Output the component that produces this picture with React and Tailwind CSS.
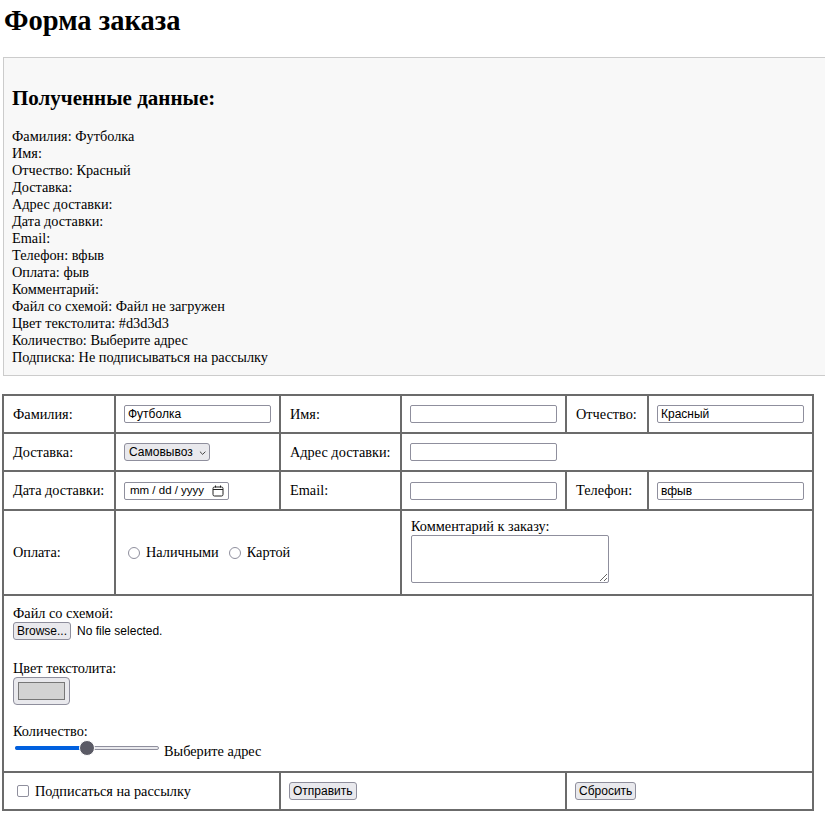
import { useState } from "react";

const received = [
  ["Фамилия", "Футболка"],
  ["Имя", ""],
  ["Отчество", "Красный"],
  ["Доставка", ""],
  ["Адрес доставки", ""],
  ["Дата доставки", ""],
  ["Email", ""],
  ["Телефон", "вфыв"],
  ["Оплата", "фыв"],
  ["Комментарий", ""],
  ["Файл со схемой", "Файл не загружен"],
  ["Цвет текстолита", "#d3d3d3"],
  ["Количество", "Выберите адрес"],
  ["Подписка", "Не подписываться на рассылку"],
];

const cell = "border-2 border-[#6b6b6b] px-2 align-middle";
const label = "border-2 border-[#6b6b6b] pl-[9px] pr-2 align-middle";
const field =
  "w-[147px] h-[18px] border border-[#8f8f9d] rounded-[2px] bg-white px-[3px] text-[12px] font-['Liberation_Sans',sans-serif] text-black outline-none";
const btn =
  "h-[18px] px-[3px] border border-[#8f8f9d] rounded-[3px] bg-[#e9e9ed] text-[12px] leading-[16px] font-['Liberation_Sans',sans-serif] text-black";

function Radio({ label }) {
  return (
    <label className="flex items-center gap-[6px]">
      <span className="w-[12px] h-[12px] rounded-full border border-[#8f8f9d] bg-white" />
      <span>{label}</span>
    </label>
  );
}

export default function App() {
  const [form, setForm] = useState({
    last: "Футболка",
    first: "",
    middle: "Красный",
    address: "",
    email: "",
    phone: "вфыв",
    comment: "",
  });
  const set = (k) => (e) => setForm({ ...form, [k]: e.target.value });

  return (
    <div className="bg-white text-black font-['Liberation_Serif','Times_New_Roman',serif] text-[14.3px] leading-[17px] pl-[3px] pb-[20px] overflow-hidden">
      <h1 className="text-[28.5px] leading-[34px] font-bold pt-[4px] pl-[1px]">Форма заказа</h1>

      <div className="mt-[19px] bg-[#f8f8f8] border-l border-t border-b border-[#cccccc] pl-[8px] pt-[29px] pb-[9px]">
        <h3 className="text-[21px] leading-[23px] font-bold">Полученные данные:</h3>
        <div className="mt-[18px]">
          {received.map(([k, v]) => (
            <p key={k}>
              {k}: {v}
            </p>
          ))}
        </div>
      </div>

      <table className="mt-[18px] -ml-[1px] w-[810px] table-fixed border-collapse">
        <colgroup>
          <col className="w-[112px]" />
          <col className="w-[165px]" />
          <col className="w-[121px]" />
          <col className="w-[165px]" />
          <col className="w-[82px]" />
          <col className="w-[165px]" />
        </colgroup>
        <tbody>
          <tr className="h-[38px]">
            <td className={label}>Фамилия:</td>
            <td className={cell}>
              <input className={field} value={form.last} onChange={set("last")} />
            </td>
            <td className={label}>Имя:</td>
            <td className={cell}>
              <input className={field} value={form.first} onChange={set("first")} />
            </td>
            <td className={label}>Отчество:</td>
            <td className={cell}>
              <input className={field} value={form.middle} onChange={set("middle")} />
            </td>
          </tr>
          <tr className="h-[38px]">
            <td className={label}>Доставка:</td>
            <td className={cell}>
              <span className={btn + " inline-flex items-center gap-[6px] w-[86px] pl-[4px]"}>
                Самовывоз
                <svg width="8" height="6" viewBox="0 0 8 6" className="mt-[1px]">
                  <path d="M1 1.5 L4 4.5 L7 1.5" fill="none" stroke="#333" strokeWidth="1" />
                </svg>
              </span>
            </td>
            <td className={label}>Адрес доставки:</td>
            <td className={cell} colSpan={3}>
              <input className={field} value={form.address} onChange={set("address")} />
            </td>
          </tr>
          <tr className="h-[39px]">
            <td className={label}>Дата доставки:</td>
            <td className={cell}>
              <span className="inline-flex items-center h-[18px] w-[105px] border border-[#8f8f9d] rounded-[2px] bg-white pl-[5px] pr-[4px] text-[11.5px] font-['Liberation_Sans',sans-serif] justify-between whitespace-nowrap">
                <span>mm / dd / yyyy</span>
                <svg width="12" height="12" viewBox="0 0 12 12">
                  <rect x="1" y="2" width="10" height="9" rx="1.5" fill="none" stroke="#222" strokeWidth="1" />
                  <line x1="1" y1="4.5" x2="11" y2="4.5" stroke="#222" strokeWidth="1" />
                  <line x1="3.5" y1="0.5" x2="3.5" y2="2.5" stroke="#222" strokeWidth="1" />
                  <line x1="8.5" y1="0.5" x2="8.5" y2="2.5" stroke="#222" strokeWidth="1" />
                </svg>
              </span>
            </td>
            <td className={label}>Email:</td>
            <td className={cell}>
              <input className={field} value={form.email} onChange={set("email")} />
            </td>
            <td className={label}>Телефон:</td>
            <td className={cell}>
              <input className={field} value={form.phone} onChange={set("phone")} />
            </td>
          </tr>
          <tr className="h-[85px]">
            <td className={label}>Оплата:</td>
            <td className={cell + " pl-[12px]"} colSpan={2}>
              <div className="flex items-center gap-[10px]">
                <Radio label="Наличными" />
                <Radio label="Картой" />
              </div>
            </td>
            <td className={label + " align-top pt-[7px]"} colSpan={3}>
              <div>Комментарий к заказу:</div>
              <textarea
                className="block w-[198px] h-[48px] border border-[#8f8f9d] rounded-[2px] bg-white resize-y"
                value={form.comment}
                onChange={set("comment")}
              />
            </td>
          </tr>
          <tr className="h-[177px]">
            <td className={label + " align-top pt-[9px]"} colSpan={6}>
              <div>Файл со схемой:</div>
              <div className="flex items-center gap-[6px] text-[12px] font-['Liberation_Sans',sans-serif] h-[18px]">
                <span className={btn}>Browse...</span>
                <span>No file selected.</span>
              </div>
              <div className="mt-[20px]">Цвет текстолита:</div>
              <div className="w-[57px] h-[28px] border border-[#8f8f9d] rounded-[4px] bg-[#e9e9ed] p-[4px]">
                <div className="w-full h-full bg-[#d3d3d3] border border-[#777]" />
              </div>
              <div className="mt-[18px]">Количество:</div>
              <div className="flex items-end gap-[5px]">
                <div className="relative w-[144px] h-[16px] ml-[2px]">
                  <div className="absolute left-0 top-[6px] w-[144px] h-[4px] rounded-full border border-[#8f8f9d] bg-[#e9e9ed]" />
                  <div className="absolute left-0 top-[6px] w-[74px] h-[4px] rounded-full bg-[#0060df]" />
                  <div className="absolute left-[64px] top-0 w-[16px] h-[16px] rounded-full bg-[#5b5b66] border border-white" />
                </div>
                <span className="mb-[-4px]">Выберите адрес</span>
              </div>
            </td>
          </tr>
          <tr className="h-[38px]">
            <td className={cell + " pl-[13px]"} colSpan={2}>
              <label className="flex items-center gap-[6px]">
                <span className="w-[12px] h-[12px] rounded-[2px] border border-[#8f8f9d] bg-white" />
                <span>Подписаться на рассылку</span>
              </label>
            </td>
            <td className={cell} colSpan={2}>
              <button className={btn}>Отправить</button>
            </td>
            <td className={cell} colSpan={2}>
              <button className={btn}>Сбросить</button>
            </td>
          </tr>
        </tbody>
      </table>
    </div>
  );
}
